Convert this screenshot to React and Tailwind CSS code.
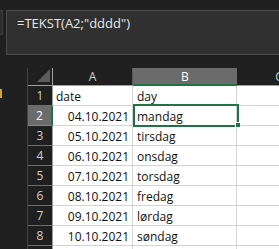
import React from "react";

const rows = [
  ["date", "day", true],
  ["04.10.2021", "mandag"],
  ["05.10.2021", "tirsdag"],
  ["06.10.2021", "onsdag"],
  ["07.10.2021", "torsdag"],
  ["08.10.2021", "fredag"],
  ["09.10.2021", "lørdag"],
  ["10.10.2021", "søndag"],
  ["", ""],
];

export default function App() {
  return (
    <div
      className="w-[279px] h-[249px] bg-[#1f1f1f] overflow-hidden relative"
      style={{ fontFamily: '"Open Sans", sans-serif' }}
    >
      <div className="h-[10px]" />
      <div className="flex h-[45px]">
        <div className="w-[3px] shrink-0 h-[25px] bg-[#2e2e2e] border-y border-r border-[#3d3d3d]" />
        <div className="ml-[3px] flex-1 bg-[#303030] border border-r-0 border-[#4b4b4b] pl-[10px] pt-[3px] text-[13px] leading-[18px] text-[#e6e6e6]">
          =TEKST(A2;"dddd")
        </div>
      </div>
      <div className="h-[13px]" />
      <div className="flex">
        <div className="w-[27px] shrink-0 relative">
          <div className="absolute left-0 top-[21px] w-[2px] h-[9px] bg-[#d9a22a]" />
        </div>
        <div className="w-[293px] shrink-0 border-l border-[#454545] relative">
          {/* header row */}
          <div className="flex h-[18px] border-b border-[#9e9e9e] text-[12px] leading-[17px]">
            <div className="w-[25px] shrink-0 border-r border-[#9e9e9e] flex items-start justify-end pr-[2px] pt-[1px]">
              <svg width="13" height="13" viewBox="0 0 13 13">
                <polygon points="13,0 13,13 0,13" fill="#5c5c5c" />
              </svg>
            </div>
            <div className="w-[80px] shrink-0 border-r border-[#5a5a5a] text-center text-[#d0d0d0]">A</div>
            <div className="w-[104px] shrink-0 bg-[#6b6b6b] border-b-2 border-[#1f7244] text-center text-white h-[18px] -mb-px">B</div>
            <div className="w-[84px] shrink-0 text-center text-[#d0d0d0]">C</div>
          </div>
          {rows.map((r, i) => {
            const sel = i === 1;
            return (
              <div key={i} className="flex h-[20px] text-[12px] leading-[16px]">
                <div
                  className={
                    "w-[25px] shrink-0 border-b text-center pt-[2px] " +
                    (sel
                      ? "bg-[#6b6b6b] text-white border-[#8a8a8a] border-r-2 border-r-[#1f7244]"
                      : "text-[#d0d0d0] border-[#6e6e6e] border-r border-r-[#9e9e9e]")
                  }
                >
                  {i < 8 ? i + 1 : ""}
                </div>
                <div
                  className={
                    "w-[80px] shrink-0 bg-white border-r border-b border-[#d4d4d4] pt-[3px] text-[#111] " +
                    (r[2] ? "text-left pl-[3px]" : "text-right pr-[3px]")
                  }
                >
                  {r[0]}
                </div>
                <div className="w-[104px] shrink-0 bg-white border-r border-b border-[#d4d4d4] pt-[3px] pl-[4px] text-[#111]">
                  {r[1]}
                </div>
                <div className="w-[84px] shrink-0 bg-white border-b border-[#d4d4d4]" />
              </div>
            );
          })}
          {/* selection */}
          <div className="absolute left-[105px] top-[36px] w-[106px] h-[23px] border-2 border-[#1f7244]" />
          <div className="absolute left-[207px] top-[54px] w-[6px] h-[6px] bg-[#1f7244] border border-white" />
        </div>
      </div>
    </div>
  );
}
